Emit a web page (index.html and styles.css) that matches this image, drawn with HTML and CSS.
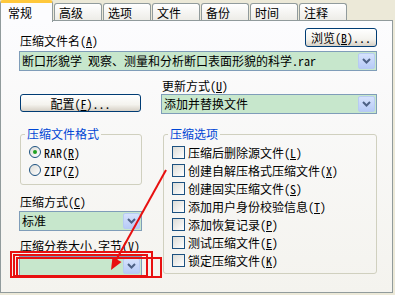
FILE: index.html
```html
<!DOCTYPE html>
<html lang="zh-CN">
<head>
    <meta charset="UTF-8">
    <title>压缩文件名和参数</title>
    <link rel="stylesheet" href="styles.css">
</head>
<body>
    <div class="dialog">
        <div class="tabs">
            <div class="tab active">常规</div>
            <div class="tab">高级</div>
            <div class="tab">选项</div>
            <div class="tab">文件</div>
            <div class="tab">备份</div>
            <div class="tab">时间</div>
            <div class="tab">注释</div>
        </div>

        <div class="panel">
            <!-- archive name -->
            <div class="name-row">
                <div class="field-label">压缩文件名(<u>A</u>)</div>
                <button class="btn browse">浏览(<u>B</u>)...</button>
            </div>
            <div class="combo">
                <span class="combo-text">断口形貌学 观察、测量和分析断口表面形貌的科学.rar</span>
                <span class="drop"><svg width="9" height="6" viewBox="0 0 9 6"><path d="M1 1 L4.5 4.5 L8 1" fill="none" stroke="#4d6185" stroke-width="2"/></svg></span>
            </div>

            <div class="columns">
                <div class="col-left">
                    <button class="btn config">配置(<u>F</u>)...</button>

                    <fieldset class="group format">
                        <legend>压缩文件格式</legend>
                        <div class="opt"><span class="radio checked"></span>RAR(<u>R</u>)</div>
                        <div class="opt"><span class="radio"></span>ZIP(<u>Z</u>)</div>
                    </fieldset>

                    <div class="field-label method-label">压缩方式(<u>C</u>)</div>
                    <div class="combo">
                        <span class="combo-text">标准</span>
                        <span class="drop"><svg width="9" height="6" viewBox="0 0 9 6"><path d="M1 1 L4.5 4.5 L8 1" fill="none" stroke="#4d6185" stroke-width="2"/></svg></span>
                    </div>

                    <div class="field-label volume-label">压缩分卷大小,字节(<u>V</u>)</div>
                    <div class="combo volume">
                        <span class="combo-text"></span>
                        <span class="drop"><svg width="9" height="6" viewBox="0 0 9 6"><path d="M1 1 L4.5 4.5 L8 1" fill="none" stroke="#4d6185" stroke-width="2"/></svg></span>
                    </div>
                </div>

                <div class="col-right">
                    <div class="field-label update-label">更新方式(<u>U</u>)</div>
                    <div class="combo">
                        <span class="combo-text">添加并替换文件</span>
                        <span class="drop"><svg width="9" height="6" viewBox="0 0 9 6"><path d="M1 1 L4.5 4.5 L8 1" fill="none" stroke="#4d6185" stroke-width="2"/></svg></span>
                    </div>

                    <fieldset class="group options">
                        <legend>压缩选项</legend>
                        <div class="opt"><span class="check"></span>压缩后删除源文件(<u>L</u>)</div>
                        <div class="opt"><span class="check"></span>创建自解压格式压缩文件(<u>X</u>)</div>
                        <div class="opt"><span class="check"></span>创建固实压缩文件(<u>S</u>)</div>
                        <div class="opt"><span class="check"></span>添加用户身份校验信息(<u>T</u>)</div>
                        <div class="opt"><span class="check"></span>添加恢复记录(<u>P</u>)</div>
                        <div class="opt"><span class="check"></span>测试压缩文件(<u>E</u>)</div>
                        <div class="opt"><span class="check"></span>锁定压缩文件(<u>K</u>)</div>
                    </fieldset>
                </div>
            </div>
        </div>

        <!-- red annotation drawn over the dialog -->
        <svg class="marks" width="395" height="295" viewBox="0 0 395 295">
            <g fill="none" stroke="#e81010" stroke-width="2">
                <rect x="11" y="252" width="141" height="25"/>
                <rect x="14" y="255" width="133" height="21"/>
                <rect x="17" y="258" width="144" height="19"/>
                <line x1="166" y1="170" x2="115" y2="262"/>
            </g>
            <polygon points="111,270 121.5,262 112.5,257" fill="#e81010"/>
        </svg>
    </div>
</body>
</html>
```

FILE: styles.css
```css
body {
    margin: 0;
    background-color: #ece9d8;
    font-family: "Noto Sans Mono CJK SC", "Noto Sans CJK SC", sans-serif;
    font-size: 12px;
    color: #000;
}

.dialog {
    position: relative;
    width: 395px;
    height: 295px;
    overflow: hidden;
}

u {
    text-decoration: underline;
    text-underline-offset: 1px;
}

/* tabs */
.tabs {
    display: flex;
    align-items: flex-end;
    height: 21px;
}

.tab {
    height: 18px;
    box-sizing: border-box;
    padding: 2px 18px 0 4px;
    margin-right: 1px;
    line-height: 14px;
    border: 1px solid #919b9c;
    border-bottom: none;
    border-radius: 3px 3px 0 0;
    background: linear-gradient(#ffffff, #ecebe6);
}

.tab.active {
    position: relative;
    z-index: 1;
    height: 22px;
    margin-bottom: -1px;
    padding: 3px 20px 0 7px;
    border-top: 3px solid #ffc83c;
    background: #fcfcfe;
}

/* panel */
.panel {
    position: relative;
    margin-top: -1px;
    width: 393px;
    height: 273px;
    box-sizing: border-box;
    padding: 0 15px 0 18px;
    border: 1px solid #919b9c;
    background: linear-gradient(#fcfcfe, #f4f3ee);
}

.field-label {
    line-height: 14px;
    padding-left: 1px;
}

.name-row {
    display: flex;
    justify-content: space-between;
    align-items: flex-end;
    margin-top: 7px;
}

.btn {
    font: inherit;
    color: #000;
    height: 19px;
    padding: 0;
    border: 1px solid #003c74;
    border-radius: 3px;
    background: linear-gradient(#ffffff 0%, #f4f3ee 60%, #d6d0c5 100%);
    line-height: 15px;
}

.browse {
    width: 72px;
    margin-bottom: 1px;
}

.config {
    display: block;
    width: 121px;
    height: 18px;
    margin: 23px 0 0 1px;
}

/* combo boxes */
.combo {
    display: flex;
    height: 20px;
    box-sizing: border-box;
    margin-top: 3px;
    border: 1px solid #7f9db9;
    background-color: #c7e7cc;
}

.combo-text {
    flex: 1;
    padding-left: 2px;
    line-height: 18px;
    white-space: nowrap;
    overflow: hidden;
}

.drop {
    display: flex;
    align-items: center;
    justify-content: center;
    width: 15px;
    margin: 1px;
    border: 1px solid #b7cbf3;
    border-radius: 2px;
    background: linear-gradient(#d6e2fc, #b7cbf7);
}

/* two columns */
.columns {
    display: grid;
    grid-template-columns: 123px 1fr;
    column-gap: 19px;
}

.update-label {
    margin-top: 8px;
}

.col-right .combo {
    margin-top: 1px;
}

.group {
    margin: 0;
    padding: 2px 8px 5px 8px;
    border: 1px solid #d0d0bf;
    border-radius: 3px;
}

.group legend {
    margin-left: -4px;
    padding: 0 2px;
    line-height: 14px;
    color: #0046d5;
}

.format {
    margin-top: 15px;
    margin-left: 1px;
}

.options {
    margin-top: 13px;
    margin-left: 2px;
    padding-bottom: 4px;
}

.opt {
    display: flex;
    align-items: center;
    height: 18px;
    white-space: nowrap;
}

.radio {
    width: 12px;
    height: 12px;
    box-sizing: border-box;
    margin-right: 3px;
    border: 1px solid #1c5180;
    border-radius: 50%;
    background: linear-gradient(135deg, #dcdcd7, #ffffff);
    display: flex;
    align-items: center;
    justify-content: center;
}

.radio.checked::after {
    content: "";
    width: 4px;
    height: 4px;
    border-radius: 50%;
    background: #21a121;
}

.check {
    width: 13px;
    height: 13px;
    box-sizing: border-box;
    margin-right: 3px;
    border: 1px solid #1c5180;
    background: linear-gradient(135deg, #dcdcd7, #ffffff);
}

.method-label {
    margin-top: 10px;
}

.col-left .method-label + .combo {
    margin-top: 2px;
}

.volume-label {
    margin-top: 8px;
}

.marks {
    position: absolute;
    top: 0;
    left: 0;
    pointer-events: none;
}
```
